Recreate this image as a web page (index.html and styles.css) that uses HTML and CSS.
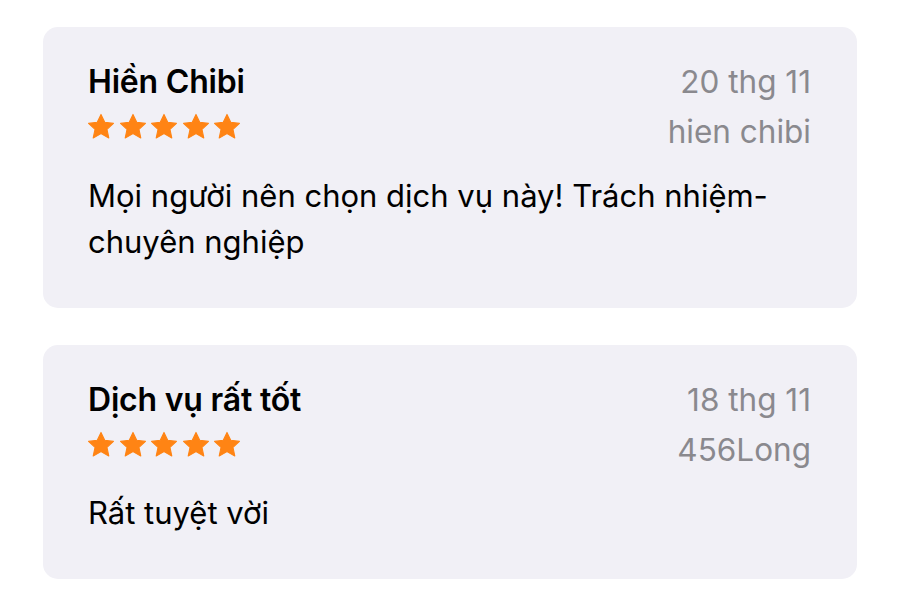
FILE: index.html
```html
<!DOCTYPE html>
<html lang="vi">
<head>
<meta charset="utf-8">
<title>Đánh giá</title>
<link rel="stylesheet" href="styles.css">
</head>
<body>
<main class="list">
  <section class="card">
    <div class="head">
      <div class="left">
        <div class="title">Hiền Chibi</div>
        <div class="stars">
          <svg class="star" viewBox="2 2 20 19"><path d="M12 2.2l2.9 6.1 6.7.8-5 4.6 1.4 6.6L12 17 6 20.3l1.4-6.6-5-4.6 6.7-.8z"/></svg>
          <svg class="star" viewBox="2 2 20 19"><path d="M12 2.2l2.9 6.1 6.7.8-5 4.6 1.4 6.6L12 17 6 20.3l1.4-6.6-5-4.6 6.7-.8z"/></svg>
          <svg class="star" viewBox="2 2 20 19"><path d="M12 2.2l2.9 6.1 6.7.8-5 4.6 1.4 6.6L12 17 6 20.3l1.4-6.6-5-4.6 6.7-.8z"/></svg>
          <svg class="star" viewBox="2 2 20 19"><path d="M12 2.2l2.9 6.1 6.7.8-5 4.6 1.4 6.6L12 17 6 20.3l1.4-6.6-5-4.6 6.7-.8z"/></svg>
          <svg class="star" viewBox="2 2 20 19"><path d="M12 2.2l2.9 6.1 6.7.8-5 4.6 1.4 6.6L12 17 6 20.3l1.4-6.6-5-4.6 6.7-.8z"/></svg>
        </div>
      </div>
      <div class="meta">
        <div>20 thg 11</div>
        <div>hien chibi</div>
      </div>
    </div>
    <p class="body">Mọi người nên chọn dịch vụ này! Trách nhiệm-chuyên nghiệp</p>
  </section>
  <section class="card">
    <div class="head">
      <div class="left">
        <div class="title">Dịch vụ rất tốt</div>
        <div class="stars">
          <svg class="star" viewBox="2 2 20 19"><path d="M12 2.2l2.9 6.1 6.7.8-5 4.6 1.4 6.6L12 17 6 20.3l1.4-6.6-5-4.6 6.7-.8z"/></svg>
          <svg class="star" viewBox="2 2 20 19"><path d="M12 2.2l2.9 6.1 6.7.8-5 4.6 1.4 6.6L12 17 6 20.3l1.4-6.6-5-4.6 6.7-.8z"/></svg>
          <svg class="star" viewBox="2 2 20 19"><path d="M12 2.2l2.9 6.1 6.7.8-5 4.6 1.4 6.6L12 17 6 20.3l1.4-6.6-5-4.6 6.7-.8z"/></svg>
          <svg class="star" viewBox="2 2 20 19"><path d="M12 2.2l2.9 6.1 6.7.8-5 4.6 1.4 6.6L12 17 6 20.3l1.4-6.6-5-4.6 6.7-.8z"/></svg>
          <svg class="star" viewBox="2 2 20 19"><path d="M12 2.2l2.9 6.1 6.7.8-5 4.6 1.4 6.6L12 17 6 20.3l1.4-6.6-5-4.6 6.7-.8z"/></svg>
        </div>
      </div>
      <div class="meta">
        <div>18 thg 11</div>
        <div>456Long</div>
      </div>
    </div>
    <p class="body">Rất tuyệt vời</p>
  </section>
</main>
</body>
</html>
```
FILE: styles.css
```css
html, body {
  margin: 0;
  padding: 0;
  background: #ffffff;
}
body {
  font-family: Inter, "Noto Sans", "Liberation Sans", sans-serif;
  color: #000000;
}
.list {
  display: flex;
  flex-direction: column;
  gap: 37px;
  padding: 27px 43px 0 43px;
}
.card {
  background: #f1f0f6;
  border-radius: 15px;
  padding: 30px 46px 43px 45px;
}
.head {
  display: flex;
  justify-content: space-between;
  align-items: flex-start;
}
.left {
  display: flex;
  flex-direction: column;
}
.title {
  font-size: 32px;
  font-weight: 600;
  line-height: 50px;
  letter-spacing: -0.2px;
}
.stars {
  display: flex;
  gap: 5.5px;
  margin-top: 7px;
}
.star {
  width: 26px;
  height: 25px;
  fill: #ff8414;
  stroke: #ff8414;
  stroke-width: 0.8;
  stroke-linejoin: round;
  overflow: visible;
}
.meta {
  text-align: right;
  color: #8a898e;
  font-size: 31.5px;
  line-height: 50px;
}
.body {
  margin: 15.5px 0 0 0;
  font-size: 31px;
  line-height: 46px;
}
```
